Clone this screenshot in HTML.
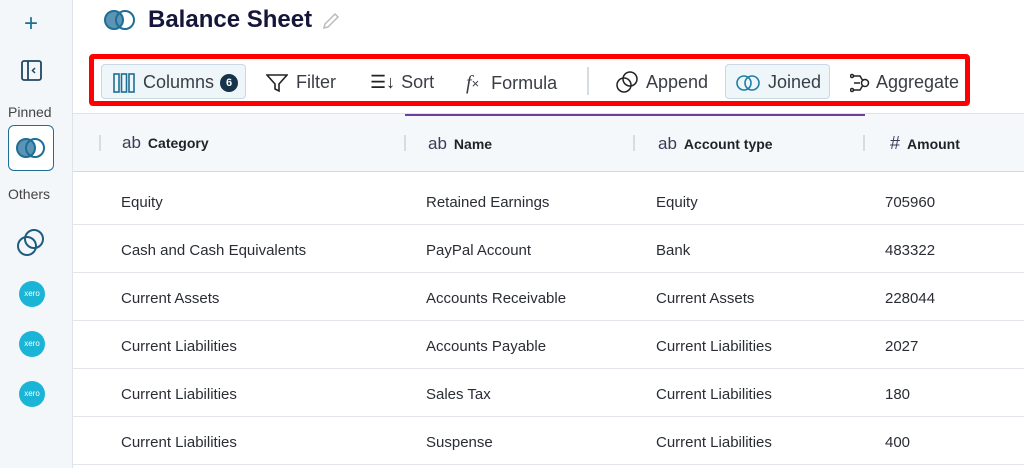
<!DOCTYPE html><html><head><style>
body{margin:0;width:1024px;height:468px;overflow:hidden;background:#fff;font-family:"Liberation Sans",sans-serif;color:#2a2d34;position:relative}
.a{position:absolute}
.side{left:0;top:0;width:72px;height:468px;background:#f3f7f9;border-right:1px solid #dde3e8}
.tb{font-size:18px;color:#3a3d45;display:flex;align-items:center;gap:8px}
.row{left:73px;width:951px;height:47px;border-bottom:1px solid #e3e7eb;font-size:15px}
.row span{position:absolute;top:17px}
.hd{font-size:14px;font-weight:bold;color:#1f2229}
.ab{font-weight:normal;font-size:17px;color:#3a3d55;margin-right:7px}
.dv{width:2px;height:16px;background:#d7dce0;top:135px}
.xero{left:19px;width:26px;height:26px;border-radius:50%;background:#1ab4d7;color:#fff;font-size:8px;text-align:center;line-height:26px}
</style></head><body>
<div class="a side"></div>
<div class="a" style="left:24px;top:10px;font-size:24px;color:#1e6e96">+</div>
<svg class="a" style="left:21px;top:60px" width="21" height="21"><rect x="1" y="1" width="19" height="19" rx="2" fill="none" stroke="#1f4860" stroke-width="1.8"/><line x1="7" y1="1" x2="7" y2="20" stroke="#1f4860" stroke-width="1.8"/><path d="M14 8l-2.5 2.5L14 13" fill="none" stroke="#1f4860" stroke-width="1.5"/></svg>
<div class="a" style="left:8px;top:104px;font-size:14px;color:#444">Pinned</div>
<div class="a" style="left:8px;top:125px;width:44px;height:44px;border:1.5px solid #1e6e96;border-radius:6px;background:#fff"></div>
<svg class="a" style="left:15px;top:136px" width="32" height="24"><circle cx="11" cy="12" r="9" fill="#5b94b4" stroke="#1e6e96" stroke-width="2"/><circle cx="20" cy="12" r="9" fill="none" stroke="#1e6e96" stroke-width="2"/></svg>
<div class="a" style="left:8px;top:186px;font-size:14px;color:#444">Others</div>
<svg class="a" style="left:16px;top:228px" width="30" height="30"><circle cx="11" cy="18" r="9" fill="none" stroke="#1e5c80" stroke-width="2"/><circle cx="18" cy="11" r="9" fill="none" stroke="#1e5c80" stroke-width="2"/></svg>
<div class="a xero" style="top:281px">xero</div>
<div class="a xero" style="top:331px">xero</div>
<div class="a xero" style="top:381px">xero</div>

<svg class="a" style="left:103px;top:8px" width="34" height="24"><circle cx="11" cy="12" r="9" fill="#5b94b4" stroke="#1e6e96" stroke-width="2"/><circle cx="22" cy="12" r="9" fill="none" stroke="#1e6e96" stroke-width="2"/></svg>
<div class="a" style="left:148px;top:6px;font-size:24px;font-weight:bold;color:#15163a">Balance Sheet</div>
<svg class="a" style="left:321px;top:11px" width="20" height="20"><path d="M3 17l1-4L14 3l3 3L7 16z" fill="none" stroke="#bbb" stroke-width="1.5"/></svg>

<div class="a" style="left:89px;top:54px;width:871px;height:42px;border:5px solid #f00;border-radius:4px"></div>
<div class="a" style="left:101px;top:64px;width:143px;height:33px;background:#eef6fa;border:1px solid #c9d8e2;border-radius:4px"></div>
<div class="a tb" style="left:113px;top:72px"><svg width="22" height="20"><g fill="none" stroke="#1e6e96" stroke-width="1.6"><rect x="1" y="1" width="5" height="18"/><rect x="8.5" y="1" width="5" height="18"/><rect x="16" y="1" width="5" height="18"/></g></svg>Columns<span style="background:#16334a;color:#fff;border-radius:50%;width:18px;height:18px;font-size:11px;font-weight:bold;text-align:center;line-height:18px;margin-left:-2px">6</span></div>
<div class="a tb" style="left:266px;top:72px"><svg width="22" height="20"><path d="M1 2h20l-8 9v7l-4-2v-5z" fill="none" stroke="#222" stroke-width="1.6"/></svg>Filter</div>
<div class="a tb" style="left:370px;top:72px;gap:6px"><span style="font-size:18px;color:#222">☰↓</span>Sort</div>
<div class="a tb" style="left:466px;top:72px"><i style="font-family:'Liberation Serif';font-size:20px">f</i><span style="font-size:13px;margin-left:-8px;margin-right:4px">×</span>Formula</div>
<div class="a" style="left:587px;top:67px;width:2px;height:28px;background:#d7dce0"></div>
<div class="a tb" style="left:616px;top:71px"><svg width="22" height="22"><circle cx="8" cy="14" r="7" fill="none" stroke="#222" stroke-width="1.5"/><circle cx="14" cy="8" r="7" fill="none" stroke="#222" stroke-width="1.5"/></svg>Append</div>
<div class="a" style="left:725px;top:64px;width:103px;height:33px;background:#eef6fa;border:1px solid #c9d8e2;border-radius:4px"></div>
<div class="a tb" style="left:736px;top:72px"><svg width="24" height="18"><circle cx="8" cy="9" r="7" fill="none" stroke="#1e7ea6" stroke-width="1.6"/><circle cx="16" cy="9" r="7" fill="none" stroke="#1e7ea6" stroke-width="1.6"/></svg>Joined</div>
<div class="a tb" style="left:850px;top:72px;gap:6px"><svg width="20" height="20"><g fill="none" stroke="#222" stroke-width="1.5"><circle cx="2" cy="3" r="1.5"/><circle cx="2" cy="17" r="1.5"/><path d="M4 3h6l3 5M4 10h6M4 17h6l3-5"/><circle cx="15" cy="10" r="3.5"/></g></svg>Aggregate</div>

<div class="a" style="left:73px;top:113px;width:951px;height:57px;background:#f5f8fa;border-top:1px solid #dde3e8;border-bottom:1px solid #d5dbe0"></div>
<div class="a" style="left:405px;top:114px;width:460px;height:2px;background:#6b3f9a"></div>
<div class="a dv" style="left:99px"></div><div class="a dv" style="left:404px"></div><div class="a dv" style="left:633px"></div><div class="a dv" style="left:863px"></div>
<div class="a hd" style="left:122px;top:133px"><span class="ab">ab</span>Category</div>
<div class="a hd" style="left:428px;top:134px"><span class="ab">ab</span>Name</div>
<div class="a hd" style="left:658px;top:134px"><span class="ab">ab</span>Account type</div>
<div class="a hd" style="left:890px;top:133px"><span class="ab" style="font-size:18px">#</span>Amount</div>

<div class="a row" style="top:177px"><span style="left:48px">Equity</span><span style="left:353px">Retained Earnings</span><span style="left:583px">Equity</span><span style="left:812px">705960</span></div>
<div class="a row" style="top:225px"><span style="left:48px">Cash and Cash Equivalents</span><span style="left:353px">PayPal Account</span><span style="left:583px">Bank</span><span style="left:812px">483322</span></div>
<div class="a row" style="top:273px"><span style="left:48px">Current Assets</span><span style="left:353px">Accounts Receivable</span><span style="left:583px">Current Assets</span><span style="left:812px">228044</span></div>
<div class="a row" style="top:321px"><span style="left:48px">Current Liabilities</span><span style="left:353px">Accounts Payable</span><span style="left:583px">Current Liabilities</span><span style="left:812px">2027</span></div>
<div class="a row" style="top:369px"><span style="left:48px">Current Liabilities</span><span style="left:353px">Sales Tax</span><span style="left:583px">Current Liabilities</span><span style="left:812px">180</span></div>
<div class="a row" style="top:417px"><span style="left:48px">Current Liabilities</span><span style="left:353px">Suspense</span><span style="left:583px">Current Liabilities</span><span style="left:812px">400</span></div>
</body></html>
